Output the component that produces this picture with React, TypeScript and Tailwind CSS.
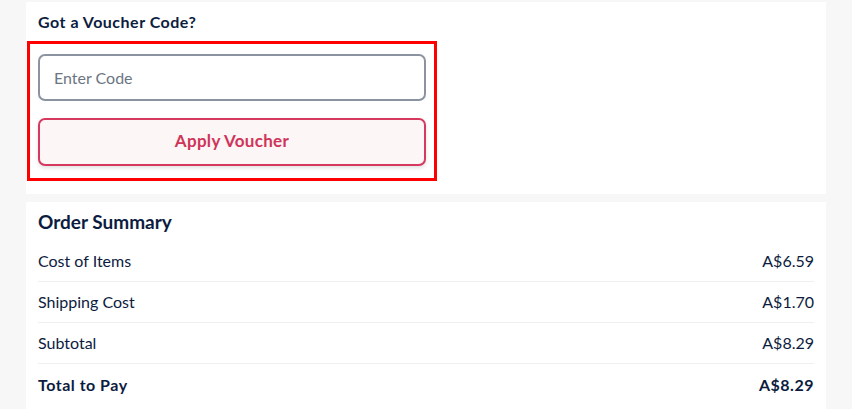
import React from "react";

const rows = [
  { label: "Cost of Items", value: "A$6.59" },
  { label: "Shipping Cost", value: "A$1.70" },
  { label: "Subtotal", value: "A$8.29" },
];

export default function App() {
  return (
    <div
      className="min-h-[409px] w-full bg-[#f7f7f7] pt-[2px] pl-[26px] pr-[26px] text-[#0c1c40]"
      style={{ fontFamily: "Lato, 'Open Sans', sans-serif" }}
    >
      {/* Voucher card */}
      <section className="flex h-[192px] w-[800px] flex-col bg-white">
        <h2 className="px-3 pt-[10px] text-[16px] font-bold leading-[20px] tracking-[0.5px]">Got a Voucher Code?</h2>
        <div className="ml-px mt-[9px] flex w-[410px] flex-col border-[3px] border-[#ff0000] px-2 pt-[10px] pb-3">
          <input
            type="text"
            placeholder="Enter Code"
            className="h-[47px] w-full rounded-[7px] border-2 border-[#8a939f] bg-white px-[14px] text-[16px] text-[#0c1c40] outline-none placeholder:text-[#6b7583]"
          />
          <button
            type="button"
            className="mt-[17px] h-[48px] w-full rounded-[7px] border-2 border-[#d6395e] bg-[#fdf6f7] pb-[2px] text-[17px] font-bold tracking-[0.3px] text-[#cf3459] shadow-[0_2px_4px_rgba(0,0,0,0.12)]"
          >
            Apply Voucher
          </button>
        </div>
      </section>

      {/* Order summary card */}
      <section className="mt-[8px] w-[800px] bg-white pb-4">
        <h2 className="px-3 pt-[8px] pb-[7px] text-[19px] font-bold leading-6">Order Summary</h2>
        <div className="mx-3">
          {rows.map((r) => (
            <div
              key={r.label}
              className="flex h-[41px] items-center justify-between border-b border-[#efefef] text-[16px]"
            >
              <span>{r.label}</span>
              <span>{r.value}</span>
            </div>
          ))}
          <div className="flex h-[41px] items-center justify-between text-[16px] font-bold tracking-[0.5px]">
            <span>Total to Pay</span>
            <span>A$8.29</span>
          </div>
        </div>
      </section>
    </div>
  );
}
